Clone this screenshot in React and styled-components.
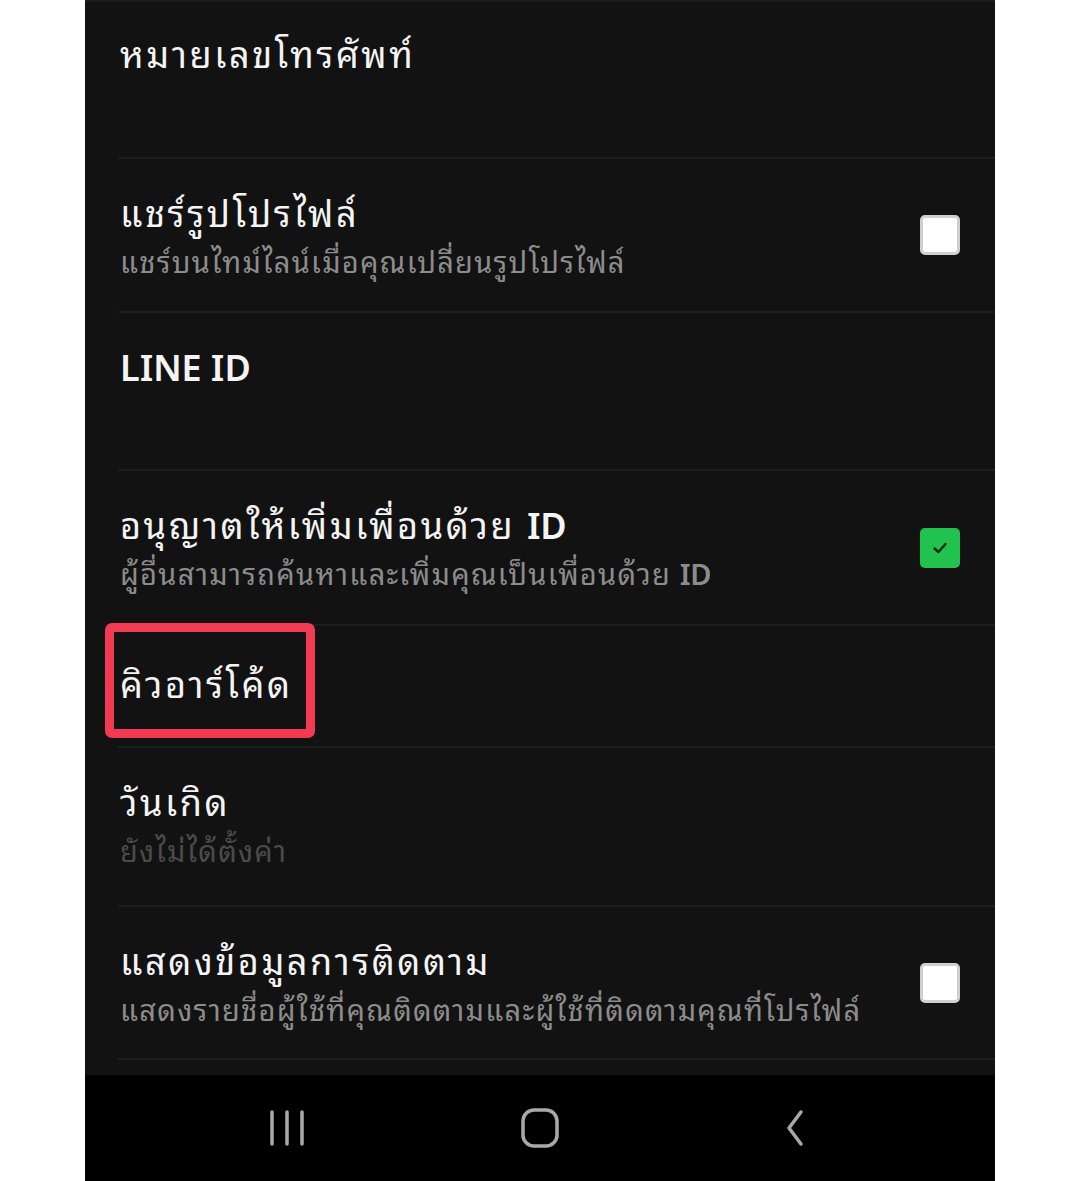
import React from 'react';
import styled, { createGlobalStyle } from 'styled-components';

const GlobalStyle = createGlobalStyle`
  html, body {
    margin: 0;
    padding: 0;
    background: #ffffff;
  }
  body {
    font-family: 'Noto Sans Thai Looped', 'Noto Sans Thai', 'Noto Sans', 'DejaVu Sans', sans-serif;
  }
`;

const Page = styled.div`
  width: 1080px;
  height: 1181px;
  display: flex;
  justify-content: center;
  background: #ffffff;
`;

const Phone = styled.div`
  width: 910px;
  height: 1181px;
  display: flex;
  flex-direction: column;
  background: #121212;
`;

const List = styled.div`
  flex: 1;
  display: flex;
  flex-direction: column;
  border-top: 2px solid #1c1c1c;
`;

const Row = styled.div`
  height: ${p => p.h}px;
  margin-left: 33px;
  padding: 0 35px 0 2px;
  box-sizing: border-box;
  display: flex;
  align-items: center;
  border-bottom: 2px solid #1d1d1d;
`;

const Texts = styled.div`
  flex: 1;
  display: flex;
  flex-direction: column;
  align-self: flex-start;
  padding-top: ${p => p.top || 27}px;
`;

const Title = styled.div`
  position: relative;
  align-self: flex-start;
  color: #f4f4f4;
  font-size: 36px;
  line-height: 50px;
  font-weight: 400;
  letter-spacing: 2.6px;
`;

const Latin = styled.span`
  letter-spacing: ${p => (p.tight ? '-0.5px' : '0')};
  font-weight: ${p => (p.bold ? 600 : 'inherit')};
`;

const Sub = styled.div`
  color: ${p => (p.dim ? '#4b4b4b' : '#8c8c8c')};
  font-size: 29px;
  line-height: 48px;
  letter-spacing: 1.3px;
`;

const Check = styled.div`
  width: 40px;
  height: 40px;
  box-sizing: border-box;
  border-radius: 5px;
  background: ${p => (p.on ? '#22c24e' : '#ffffff')};
  border: ${p => (p.on ? 'none' : '3px solid #cfcfcf')};
  display: flex;
  align-items: center;
  justify-content: center;
`;

const Highlight = styled.div`
  position: absolute;
  left: -15px;
  top: -34px;
  width: 210px;
  height: 115px;
  box-sizing: border-box;
  border: 9px solid #f23a52;
  border-radius: 7px;
  pointer-events: none;
`;

const Tail = styled.div`
  flex: 1;
`;

const NavBar = styled.div`
  height: 106px;
  background: #000000;
  display: grid;
  grid-template-columns: repeat(3, 1fr);
  align-items: center;
  justify-items: center;
  padding: 0 75px;
`;

const NavIcon = styled.svg`
  width: 40px;
  height: 40px;
  stroke: #a9a9a9;
  fill: none;
  stroke-width: 3.5;
  stroke-linecap: round;
  stroke-linejoin: round;
`;

const CheckMark = () => (
  <svg width="18" height="18" viewBox="0 0 18 18">
    <path d="M3.5 9.5 L7.5 13 L14.5 5" fill="none" stroke="#0d2a14" strokeWidth="2.4" strokeLinecap="round" strokeLinejoin="round" />
  </svg>
);

export default function App() {
  return (
    <Page>
      <GlobalStyle />
      <Phone>
        <List>
          <Row h={157}>
            <Texts top={25}>
              <Title>หมายเลขโทรศัพท์</Title>
            </Texts>
          </Row>
          <Row h={154}>
            <Texts>
              <Title>แชร์รูปโปรไฟล์</Title>
              <Sub>แชร์บนไทม์ไลน์เมื่อคุณเปลี่ยนรูปโปรไฟล์</Sub>
            </Texts>
            <Check />
          </Row>
          <Row h={158}>
            <Texts>
              <Title><Latin bold>LINE ID</Latin></Title>
            </Texts>
          </Row>
          <Row h={155}>
            <Texts>
              <Title>อนุญาตให้เพิ่มเพื่อนด้วย <Latin bold tight>ID</Latin></Title>
              <Sub>ผู้อื่นสามารถค้นหาและเพิ่มคุณเป็นเพื่อนด้วย <Latin bold tight>ID</Latin></Sub>
            </Texts>
            <Check on>
              <CheckMark />
            </Check>
          </Row>
          <Row h={122}>
            <Texts top={31}>
              <Title>
                คิวอาร์โค้ด
                <Highlight />
              </Title>
            </Texts>
          </Row>
          <Row h={159}>
            <Texts>
              <Title>วันเกิด</Title>
              <Sub dim>ยังไม่ได้ตั้งค่า</Sub>
            </Texts>
          </Row>
          <Row h={153}>
            <Texts>
              <Title>แสดงข้อมูลการติดตาม</Title>
              <Sub>แสดงรายชื่อผู้ใช้ที่คุณติดตามและผู้ใช้ที่ติดตามคุณที่โปรไฟล์</Sub>
            </Texts>
            <Check />
          </Row>
          <Tail />
        </List>
        <NavBar>
          <NavIcon viewBox="0 0 40 40">
            <path d="M5 4 V36 M20 4 V36 M35 4 V36" />
          </NavIcon>
          <NavIcon viewBox="0 0 40 40">
            <rect x="3" y="2" width="34" height="36" rx="11" />
          </NavIcon>
          <NavIcon viewBox="0 0 40 40">
            <path d="M28 4 L16 20 L28 36" />
          </NavIcon>
        </NavBar>
      </Phone>
    </Page>
  );
}
